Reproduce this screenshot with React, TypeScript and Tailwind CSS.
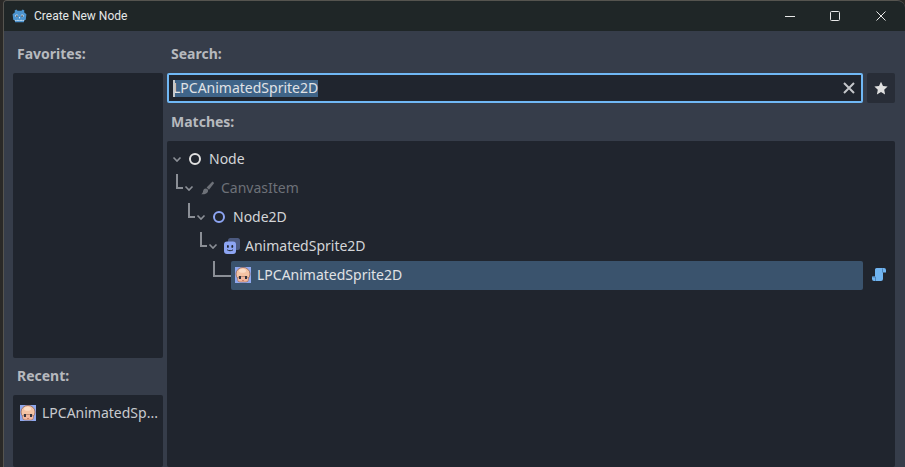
const FONT = "font-['Noto_Sans','Liberation_Sans',sans-serif]";

function GodotLogo() {
  return (
    <svg width="17" height="17" viewBox="0 0 16 16" className="shrink-0">
      <path d="M5 1.500l1.200 1.200h3.600L11 1.500l1.600.8-.3 1.600 2.200 2-.6 5.100-1.400.5-.4 2H3.900l-.4-2-1.400-.5-.6-5.100 2.200-2-.3-1.600z" fill="#4b93cf" />
      <circle cx="5.400" cy="7.400" r="1.400" fill="#cfe3f3" />
      <circle cx="10.600" cy="7.400" r="1.400" fill="#cfe3f3" />
      <circle cx="5.600" cy="7.600" r="0.800" fill="#2b3a4a" />
      <circle cx="10.400" cy="7.600" r="0.800" fill="#2b3a4a" />
      <rect x="7.500" y="8.400" width="1" height="1.400" fill="#cfe3f3" />
      <path d="M3.600 11l1.600.5 1.200-.4 1.600.5 1.600-.5 1.200.4 1.600-.5v.9H3.600z" fill="#cfe3f3" />
    </svg>
  );
}

function Chevron() {
  return (
    <svg width="10" height="10" viewBox="0 0 10 10" className="shrink-0">
      <path d="M1.500 3.500 5 7l3.500-3.500" fill="none" stroke="#8b8f96" strokeWidth="1.600" />
    </svg>
  );
}

function RingIcon({ color }: { color: string }) {
  return (
    <svg width="15" height="14" viewBox="0 0 15 14" className="shrink-0">
      <circle cx="7" cy="7" r="5" fill="none" stroke={color} strokeWidth="2" />
    </svg>
  );
}

function BrushIcon() {
  return (
    <svg width="17" height="16" viewBox="0 0 17 16" className="shrink-0">
      <path d="M13.500 1.500 15.200 3 10 9.800 7.600 7.600z" fill="#6d7178" />
      <path d="M6.600 8.400c1.700 0 2.800 1.300 2.500 2.800-.4 2-3 3.300-6.900 3.100 1.400-.9 1.700-1.900 1.900-3.200.2-1.500 1-2.700 2.500-2.700z" fill="#6d7178" />
    </svg>
  );
}

function SpriteIcon() {
  return (
    <svg width="16" height="16" viewBox="0 0 16 16" className="-mr-px shrink-0">
      <rect x="4" y="0" width="12" height="12" rx="2.500" fill="#4c5a80" />
      <rect x="0" y="3.500" width="12" height="12.500" rx="3" fill="#8da5f3" />
      <rect x="3" y="7" width="1.800" height="2.800" rx="0.900" fill="#20252e" />
      <rect x="7.400" y="7" width="1.800" height="2.800" rx="0.900" fill="#20252e" />
      <path d="M3.200 11.800c1.500 1.200 4.300 1.200 5.800 0" fill="none" stroke="#20252e" strokeWidth="1" />
    </svg>
  );
}

function BabyIcon() {
  return (
    <svg width="16" height="16" viewBox="0 0 16 16" className="shrink-0">
      <rect x="0" y="0" width="16" height="16" fill="#8fa8ee" />
      <ellipse cx="8" cy="7" rx="7" ry="6.600" fill="#f4c3a4" stroke="#8a5a4a" strokeWidth="0.700" />
      <rect x="2.500" y="9.500" width="11" height="5.500" rx="2.500" fill="#f2b79e" stroke="#8a5a4a" strokeWidth="0.500" />
      <ellipse cx="7.500" cy="3.800" rx="3.500" ry="2" fill="#fbdcc6" />
      <rect x="4" y="9" width="2" height="3" fill="#2f3340" />
      <rect x="10" y="9" width="2" height="3" fill="#2f3340" />
      <rect x="7.200" y="13" width="1.600" height="0.800" fill="#b5614f" />
    </svg>
  );
}

function ScriptIcon() {
  return (
    <svg width="14" height="15" viewBox="0 0 14 15" className="shrink-0">
      <path d="M4.500 1h7.500a2 2 0 0 1 2 2v2.500h-3V12a2 2 0 0 1-2 2H2a2 2 0 0 1-2-2V9.500h3V2.500A1.500 1.500 0 0 1 4.500 1z" fill="#70b4f0" />
      <path d="M10.500 1.500v4M.5 10h3v4" fill="none" stroke="#4d83b8" strokeWidth="1" />
    </svg>
  );
}

const ROWS = [
  { name: 'Node', icon: <RingIcon color="#e0e0e0" />, pad: 'pl-[5px]', gap: 'gap-[6px]', hook: null, text: 'text-[#d3d5d8]' },
  { name: 'CanvasItem', icon: <BrushIcon />, pad: 'pl-[17px]', gap: 'gap-[5px]', hook: 'left-[9px]', text: 'text-[#6d7178]' },
  { name: 'Node2D', icon: <RingIcon color="#8da5f3" />, pad: 'pl-[29px]', gap: 'gap-[6px]', hook: 'left-[21px]', text: 'text-[#d3d5d8]' },
  { name: 'AnimatedSprite2D', icon: <SpriteIcon />, pad: 'pl-[41px]', gap: 'gap-[6px]', hook: 'left-[33px]', text: 'text-[#d3d5d8]' },
];

function TreeRow({ row }: { row: (typeof ROWS)[number] }) {
  return (
    <div className={`relative flex h-[29px] items-center ${row.pad} ${row.gap}`}>
      {row.hook && (
        <span className={`absolute top-[1px] h-[15px] w-[7px] border-b-2 border-l-2 border-[#8b8f96] ${row.hook}`} />
      )}
      <Chevron />
      {row.icon}
      <span className={`text-[14px] ${row.text}`}>{row.name}</span>
    </div>
  );
}

function Label({ children }: { children: string }) {
  return <div className="flex h-[19px] items-center pl-1 text-[14px] font-bold text-[#b6b9be]">{children}</div>;
}

export default function App() {
  return (
    <div className={`flex h-[467px] w-[905px] flex-col overflow-hidden bg-[#2a2927] pl-[3px] ${FONT}`}>
      <div className="flex h-[467px] flex-col overflow-hidden rounded-tl-[4px] rounded-tr-[8px] border-l border-t border-[#55544f] bg-[#363d4a]">
        {/* title bar */}
        <div className="flex h-[30px] shrink-0 items-center bg-[#1f2627]">
          <div className="ml-[7px]"><GodotLogo /></div>
          <span className="ml-[6px] font-['Roboto',sans-serif] text-[12px] text-[#e6e8e8]">Create New Node</span>
          <div className="ml-auto flex items-center gap-[35px] pr-[19px] text-[#e8e8e8]">
            <svg width="10" height="10" viewBox="0 0 10 10"><path d="M0 5.500h10" stroke="currentColor" strokeWidth="1" /></svg>
            <svg width="10" height="10" viewBox="0 0 10 10"><rect x="0.500" y="0.500" width="9" height="9" rx="1" fill="none" stroke="currentColor" /></svg>
            <svg className="ml-px" width="10" height="10" viewBox="0 0 10 10"><path d="M.5.500l9 9M9.500.500l-9 9" stroke="currentColor" strokeWidth="1" /></svg>
          </div>
        </div>

        <div className="flex min-h-0 flex-1 gap-1 pl-[9px] pr-[10px] pt-[13px]">
          {/* left column */}
          <div className="flex w-[150px] shrink-0 flex-col">
            <Label>Favorites:</Label>
            <div className="mt-[10px] h-[285px] rounded-[2px] bg-[#20252e]" />
            <div className="mt-[8px]"><Label>Recent:</Label></div>
            <div className="mt-[10px] flex-1 rounded-[2px] bg-[#20252e] pl-[7px] pt-[7px]">
              <div className="flex items-center gap-[6px]">
                <BabyIcon />
                <span className="truncate text-[14px] text-[#c8cace]">LPCAnimatedSp...</span>
              </div>
            </div>
          </div>

          {/* right column */}
          <div className="flex min-w-0 flex-1 flex-col">
            <Label>Search:</Label>
            <div className="mt-[10px] flex h-[30px] gap-1">
              <div className="flex flex-1 items-center rounded-[2px] border-2 border-[#70b8f5] bg-[#20252e] pl-[4px] pr-[5px]">
                <span className="relative h-[17px] bg-[#3f6488] text-[14px] leading-[15px] text-[#e0e2e5]">
                  LPCAnimatedSprite2D
                  <span className="absolute left-0 top-0 h-[17px] w-[2px] bg-[#c4c8cc]" />
                </span>
                <svg className="ml-auto" width="14" height="14" viewBox="0 0 14 14">
                  <path d="M2 2l10 10M12 2 2 12" stroke="#c4c6ca" strokeWidth="2" />
                </svg>
              </div>
              <div className="flex w-[28px] items-center justify-center rounded-[2px] bg-[#282d37]">
                <svg width="14" height="14" viewBox="0 0 14 14">
                  <path d="M7 .8 9 5l4.600.6-3.400 3.200.9 4.600L7 11.100l-4.100 2.300.9-4.600L.4 5.600 5 5z" fill="#e0e0e0" />
                </svg>
              </div>
            </div>
            <div className="mt-[9px]"><Label>Matches:</Label></div>
            <div className="mt-[10px] flex-1 rounded-[2px] bg-[#20252e] pt-[3px]">
              {ROWS.map((row) => (
                <TreeRow key={row.name} row={row} />
              ))}
              <div className="relative flex h-[30px] items-end pl-[64px] pr-[32px]">
                <span className="absolute left-[46px] top-[1px] h-[16px] w-[18px] border-b-2 border-l-2 border-[#8b8f96]" />
                <div className="flex h-[29px] flex-1 items-center gap-[6px] rounded-[2px] bg-[#3a536d] pb-[2px] pl-[4px]">
                  <BabyIcon />
                  <span className="text-[14px] text-[#e0e2e5]">LPCAnimatedSprite2D</span>
                </div>
                <span className="absolute right-[9px] top-[7px]"><ScriptIcon /></span>
              </div>
            </div>
          </div>
        </div>
      </div>
    </div>
  );
}
